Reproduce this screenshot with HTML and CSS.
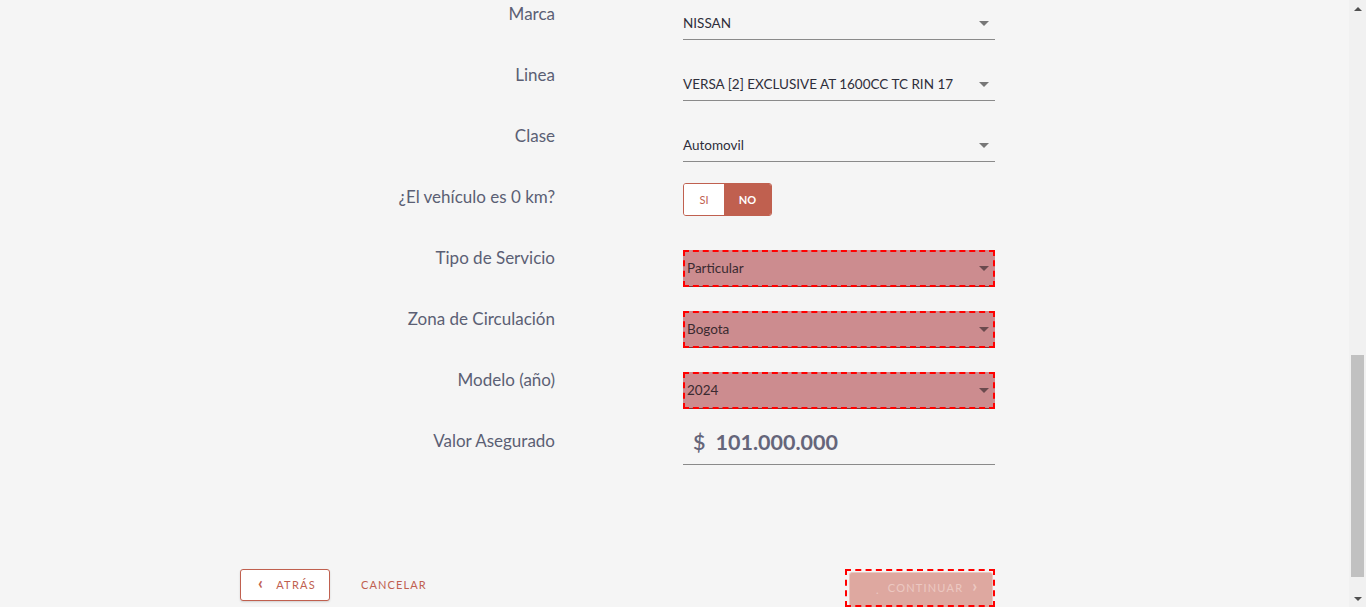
FILE: index.html
```html
<!DOCTYPE html>
<html lang="es">
<head>
<meta charset="utf-8">
<title>Datos del vehículo</title>
<link rel="stylesheet" href="styles.css">
</head>
<body>
<div class="viewport">
  <main class="page">
    <form class="form">
      <div class="row">
        <label class="label">Marca</label>
        <div class="field"><div class="select"><span>NISSAN</span><i class="caret"></i></div></div>
      </div>
      <div class="row">
        <label class="label">Linea</label>
        <div class="field"><div class="select"><span>VERSA [2] EXCLUSIVE AT 1600CC TC RIN 17</span><i class="caret"></i></div></div>
      </div>
      <div class="row">
        <label class="label">Clase</label>
        <div class="field"><div class="select"><span>Automovil</span><i class="caret"></i></div></div>
      </div>
      <div class="row">
        <label class="label">¿El vehículo es 0 km?</label>
        <div class="field">
          <div class="toggle">
            <span class="opt">SI</span>
            <span class="opt active">NO</span>
          </div>
        </div>
      </div>
      <div class="row">
        <label class="label">Tipo de Servicio</label>
        <div class="field"><div class="select invalid"><span>Particular</span><i class="caret"></i></div></div>
      </div>
      <div class="row">
        <label class="label">Zona de Circulación</label>
        <div class="field"><div class="select invalid"><span>Bogota</span><i class="caret"></i></div></div>
      </div>
      <div class="row">
        <label class="label">Modelo (año)</label>
        <div class="field"><div class="select invalid"><span>2024</span><i class="caret"></i></div></div>
      </div>
      <div class="row row-value">
        <label class="label">Valor Asegurado</label>
        <div class="field"><div class="money"><span class="cur">$</span><span class="amount">101.000.000</span></div></div>
      </div>
    </form>
    <div class="actions">
      <button class="btn-back" type="button"><span class="chev">‹</span>ATRÁS</button>
      <button class="btn-link" type="button">CANCELAR</button>
      <div class="spacer"></div>
      <div class="continue-wrap">
        <button class="btn-continue" type="button"><span class="dot">.</span>CONTINUAR<span class="chev-r">›</span></button>
      </div>
    </div>
  </main>
  <aside class="scrollbar">
    <div class="arrow up"></div>
    <div class="track"><div class="thumb"></div></div>
    <div class="arrow down"></div>
  </aside>
</div>
</body>
</html>
```
FILE: styles.css
```css
* { box-sizing: border-box; }
html, body { margin: 0; padding: 0; height: 100%; overflow: hidden; }
body {
  background: #f5f5f5;
  font-family: "Lato", "Liberation Sans", sans-serif;
}
.viewport {
  display: flex;
  height: 607px;
}
.page {
  flex: 1;
  padding-left: 240px;
  display: flex;
  flex-direction: column;
}
.form {
  width: 755px;
  display: flex;
  flex-direction: column;
}
.row {
  display: grid;
  grid-template-columns: 315px 312px;
  column-gap: 128px;
  height: 61px;
}
.label {
  text-align: right;
  color: #5b5f74;
  font-size: 17px;
  line-height: 20px;
  padding-top: 4px;
}
.select {
  position: relative;
  margin-top: 6px;
  height: 34px;
  border-bottom: 1px solid #8a8a8a;
  display: flex;
  align-items: center;
  font-size: 13.5px;
  color: #2e2e3a;
  padding-right: 24px;
}
.caret {
  position: absolute;
  right: 6px;
  top: 15px;
  width: 0; height: 0;
  border-left: 5px solid transparent;
  border-right: 5px solid transparent;
  border-top: 5px solid #777;
}
.select.invalid {
  margin-top: 6px;
  height: 37px;
  background: #cc8c8f;
  outline: 2px dashed #ff0000;
  outline-offset: -2px;
  padding-left: 4px;
  border-bottom-color: #7a3a3a;
  color: #3a2a30;
}
.select.invalid .caret { border-top-color: #6a4a4e; top: 16px; }
.toggle {
  display: flex;
  width: 89px;
  height: 33px;
  border: 1px solid #c0604f;
  border-radius: 3px;
  overflow: hidden;
}
.opt {
  display: flex;
  align-items: center;
  justify-content: center;
  font-size: 11px;
  color: #c0604f;
  background: #fff;
  width: 40px;
}
.opt.active {
  flex: 1;
  background: #c0604f;
  color: #fff;
  font-weight: 700;
}
.row-value { height: 61px; }
.money {
  height: 38px;
  border-bottom: 1px solid #8a8a8a;
  display: flex;
  align-items: center;
  gap: 10px;
  padding-left: 10px;
  color: #65657a;
  font-size: 21.5px;
  font-weight: 700;
  padding-bottom: 8px;
}
.money .cur { font-weight: 600; }
.actions {
  width: 755px;
  margin-top: 81px;
  display: flex;
  align-items: flex-start;
}
.btn-back {
  width: 90px;
  height: 32px;
  background: #fff;
  border: 1px solid #c0604f;
  border-radius: 3px;
  color: #c0604f;
  font-family: inherit;
  font-size: 11px;
  letter-spacing: 1.3px;
  display: flex;
  align-items: center;
  justify-content: center;
  gap: 12px;
  box-shadow: 0 1px 2px rgba(0,0,0,0.15);
  padding: 0 0 2px 4px;
}
.chev { font-size: 17px; line-height: 1; margin-top: -3px; font-weight: 700; }
.btn-link {
  margin-left: 31px;
  height: 31px;
  background: none;
  border: 0;
  color: #c0604f;
  font-family: inherit;
  font-size: 11px;
  letter-spacing: 1.1px;
  padding: 0;
}
.spacer { flex: 1; }
.continue-wrap {
  width: 150px;
  height: 38px;
  outline: 2px dashed #ff0000;
  outline-offset: -2px;
  padding: 3px 2px 0 4px;
  background: #f5f5f5;
}
.btn-continue {
  width: 100%;
  height: 36px;
  background: #dea8a0;
  border: 1px solid #e8c8c2;
  border-radius: 3px;
  color: #ecc8c2;
  font-family: inherit;
  font-size: 11px;
  letter-spacing: 1.2px;
  display: flex;
  align-items: flex-start;
  justify-content: flex-start;
  padding: 8px 0 0 26px;
}
.dot { margin-right: 8px; margin-top: 2px; }
.chev-r { font-size: 17px; line-height: 1; margin-top: -4px; margin-left: 9px; font-weight: 700; }
.scrollbar {
  width: 17px;
  background: #f1f1f1;
  display: flex;
  flex-direction: column;
}
.arrow { height: 17px; display: flex; align-items: center; justify-content: center; }
.arrow.up::before {
  content: ""; border-left: 4px solid transparent; border-right: 4px solid transparent;
  border-bottom: 4px solid #505050;
}
.arrow.down::before {
  content: ""; border-left: 4px solid transparent; border-right: 4px solid transparent;
  border-top: 4px solid #505050;
}
.track { flex: 1; padding: 338px 2px 13px 2px; }
.thumb { height: 100%; background: #c1c1c1; }
```
